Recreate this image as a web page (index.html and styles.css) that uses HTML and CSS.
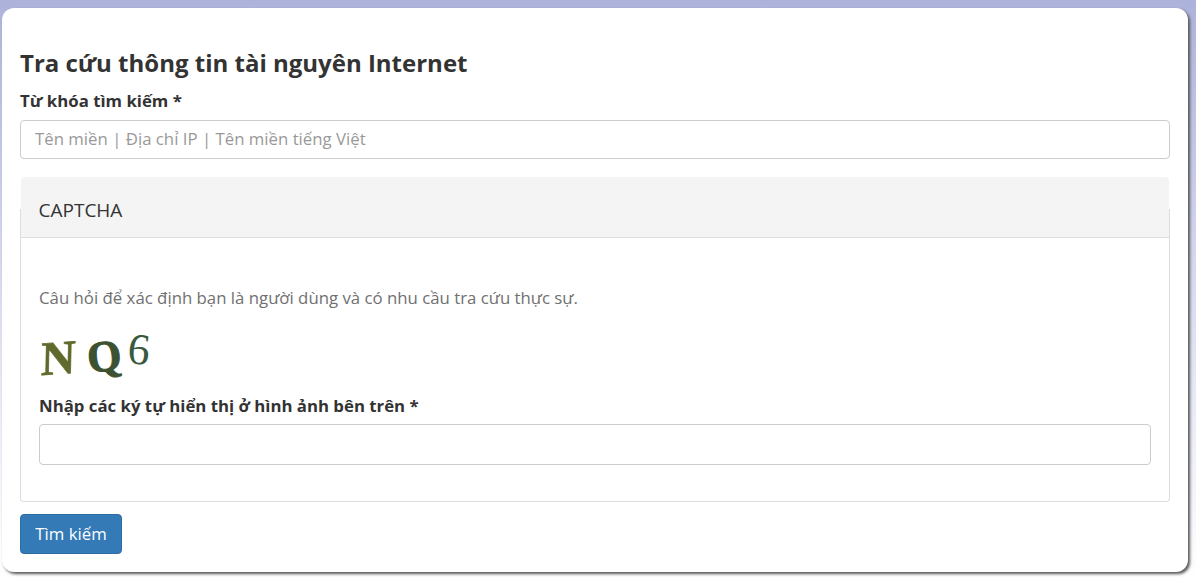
FILE: index.html
```html
<!DOCTYPE html>
<html lang="vi">
<head>
<meta charset="utf-8">
<title>Tra cứu thông tin tài nguyên Internet</title>
<link rel="stylesheet" href="styles.css">
</head>
<body>
<main class="card">
  <h1 class="title">Tra cứu thông tin tài nguyên Internet</h1>
  <label class="label" for="q">Từ khóa tìm kiếm *</label>
  <input class="input input-q" id="q" type="text" placeholder="Tên miền | Địa chỉ IP | Tên miền tiếng Việt">
  <section class="panel">
    <h2 class="panel-heading">CAPTCHA</h2>
    <div class="panel-body">
      <p class="help">Câu hỏi để xác định bạn là người dùng và có nhu cầu tra cứu thực sự.</p>
      <svg class="captcha" width="114" height="58" viewBox="0 0 114 58" aria-label="NQ6">
        <text class="cap-n" x="5" y="49" transform="rotate(-4 20 35) skewX(-5)">N</text>
        <text class="cap-q" x="48" y="46" transform="rotate(-6 65 30)">Q</text>
        <text class="cap-6" x="89" y="39" transform="rotate(6 100 24)">6</text>
      </svg>
      <label class="label label-c" for="c">Nhập các ký tự hiển thị ở hình ảnh bên trên *</label>
      <input class="input input-c" id="c" type="text">
    </div>
  </section>
  <button class="btn" type="button">Tìm kiếm</button>
</main>
</body>
</html>
```
FILE: styles.css
```css
* { box-sizing: border-box; }
html, body { height: 100%; }
body {
  margin: 0;
  padding: 8px 8px 8px 2px;
  background: linear-gradient(180deg, #adb2db 0, #d9dcf0 50%, #fff 100%);
  font-family: "Open Sans", sans-serif;
  color: #333;
  overflow: hidden;
}
.card {
  width: 1186px;
  height: 564px;
  padding: 38px 18px 0;
  background: #fff;
  border-radius: 12px;
  box-shadow: 2px 2px 3px #555;
}
.title {
  margin: 0 0 10px;
  font-size: 24px;
  line-height: 34px;
  font-weight: 700;
  color: #333;
}
.label {
  display: block;
  font-size: 16.8px;
  line-height: 22px;
  font-weight: 700;
  margin-bottom: 8px;
}
.input {
  display: block;
  width: 100%;
  height: 39px;
  padding: 5px 14px 7px;
  border: 1px solid #ccc;
  border-radius: 4px;
  background: #fff;
  font-family: inherit;
  font-size: 16.8px;
  color: #555;
  outline: none;
}
.input::placeholder { color: #999; opacity: 1; }
.panel {
  display: flow-root;
  margin-top: 50px;
  height: 293px;
  border: 1px solid #ddd;
  border-top: 0;
  border-radius: 0 0 4px 4px;
}
.panel-heading {
  margin: -32px 0 0;
  height: 61px;
  padding: 6px 18px 0 17.5px;
  display: flex;
  align-items: center;
  background: #f4f4f4;
  border-bottom: 1px solid #ddd;
  border-radius: 4px 4px 0 0;
  font-size: 19px;
  font-weight: 400;
  color: #333;
}
.panel-body { padding: 0 18px; }
.help {
  margin: 49px 0 0;
  font-size: 16.8px;
  line-height: 22px;
  color: #707070;
}
.captcha { display: block; margin-top: 16px; overflow: visible; }
.captcha text { font-family: "Liberation Serif", serif; }
.cap-n { font-size: 48px; font-weight: 700; fill: #5f6a2c; stroke: #5f6a2c; stroke-width: 0.6; }
.cap-q { font-size: 44px; font-weight: 700; fill: #3c5230; stroke: #3c5230; stroke-width: 1; }
.cap-6 { font-size: 44px; font-weight: 400; fill: #3a5a40; }
.label-c { margin: 12px 0 7px; }
.input-c { height: 41px; }
.btn {
  display: block;
  margin-top: 12px;
  width: 102px;
  height: 40px;
  padding: 0 0 2px;
  border: 1px solid #2e6da4;
  border-radius: 4px;
  background: #337ab7;
  color: #fff;
  font-family: inherit;
  font-size: 16.8px;
}
```
